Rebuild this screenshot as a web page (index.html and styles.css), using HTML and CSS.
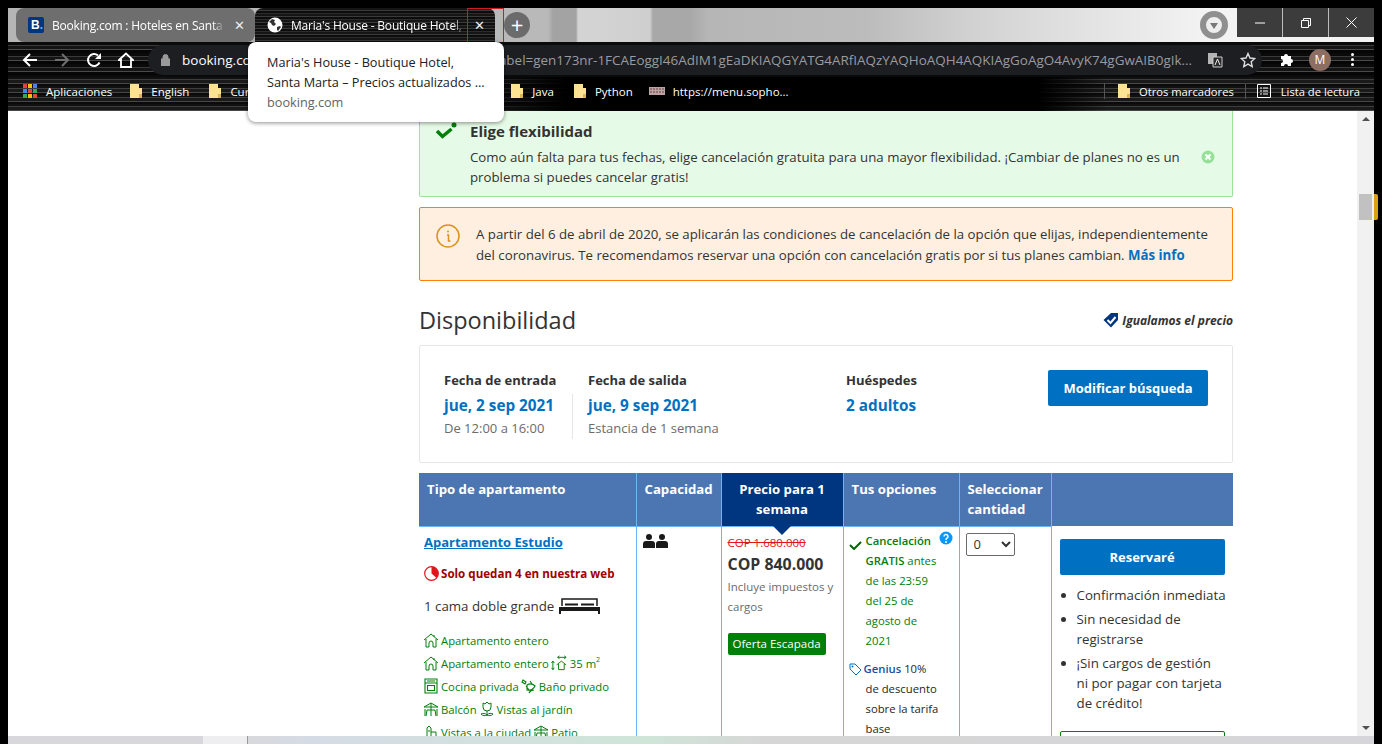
FILE: index.html
```html
<!DOCTYPE html>
<html lang="es">
<head>
<meta charset="utf-8">
<title>Maria's House - Boutique Hotel</title>
<link rel="stylesheet" href="styles.css">
</head>
<body>
<svg class="defs" width="0" height="0" aria-hidden="true">
  <symbol id="folder" viewBox="0 0 14 16"><path d="M1 1h9v4h3v10H1z" fill="#fde293"/><path d="M10 11h3v4h-3z" fill="#d8b65c"/></symbol>
  <symbol id="house" viewBox="0 0 16 16"><path d="M1 8l7-6 7 6M3 7v8h3v-4a2 2 0 0 1 4 0v4h3V7M11 3v2" fill="none" stroke="#008009" stroke-width="1"/></symbol>
  <symbol id="size" viewBox="0 0 18 16"><path d="M7 2h9M7 2l2-1.500M16 2l-2-1.500M7 2l2 1.500M16 2l-2 1.500M2 6v9M2 6L.5 8M2 6l1.500 2M2 15L.5 13M2 15l1.500-2M6 10l5-4 5 4M8 9v6h6V9" fill="none" stroke="#008009" stroke-width="1"/></symbol>
  <symbol id="kitchen" viewBox="0 0 14 16"><path d="M1 1h12v14H1zM1 5h12M3.500 7.500h7v5h-7zM3 3h8" fill="none" stroke="#008009" stroke-width="1.100"/></symbol>
  <symbol id="plant" viewBox="0 0 16 16"><path d="M2 2l3 2-1 2-3-2zM6 7c3-2 6-1 8 1-1 3-5 5-8 4zM8 15c1-2 3-3 5-3M5 8l3 4M9 3l2 3" fill="none" stroke="#008009" stroke-width="1.100"/></symbol>
  <symbol id="balcony" viewBox="0 0 16 16"><path d="M1 6l7-4 7 4zM8 2v13M4 9h8M2 8v7M14 8v7M4 9l-1 6M12 9l1 6" fill="none" stroke="#008009" stroke-width="1"/></symbol>
  <symbol id="flower" viewBox="0 0 16 16"><path d="M4 2l2 1 2-2 2 2 2-1v4a4 4 0 0 1-8 0zM8 10v5M8 14c-2 1-4 1-6-1 2-1 4-1 6 1zM8 14c2 1 4 1 6-1-2-1-4-1-6 1z" fill="none" stroke="#008009" stroke-width="1"/></symbol>
  <symbol id="city" viewBox="0 0 14 16"><path d="M3 15V4l2-2 2 2v11M7 8h5v7M1 15h12M5 6v2" fill="none" stroke="#008009" stroke-width="1"/></symbol>
</svg>

<div class="window">
  <header class="tabstrip">
    <div class="tab tab-inactive">
      <span class="fav-b">B<i>.</i></span>
      <span class="tab-title tab-fade">Booking.com : Hoteles en Santa Marta</span>
      <span class="tab-x">✕</span>
    </div>
    <div class="tab tab-active">
      <svg class="globe" width="16" height="16" viewBox="0 0 16 16"><circle cx="8" cy="8" r="7.500" fill="#fff"/><path d="M2 5l3-3 3 1-1 2 2 2-2 2-2-1-1-2zM10 10l3-1 1 1-3 4-1-1z" fill="#333"/></svg>
      <span class="tab-title tab-fade">Maria's House - Boutique Hotel, Santa Marta</span>
      <span class="tab-x">✕</span>
    </div>
    <div class="newtab">+</div>
    <div class="strip-fill"></div>
    <div class="profile-ring"><span class="profile-dot"></span></div>
    <div class="winctl">
      <span class="winbtn"><svg width="10" height="10" viewBox="0 0 10 10"><path d="M0 5h10" stroke="#fff"/></svg></span>
      <span class="winbtn"><svg width="10" height="10" viewBox="0 0 10 10"><path d="M.5 2.500h7v7h-7zM2.500 2.500v-2h7v7h-2" fill="none" stroke="#fff"/></svg></span>
      <span class="winbtn"><svg width="11" height="11" viewBox="0 0 11 11"><path d="M.5.5l10 10M10.500.5l-10 10" stroke="#fff"/></svg></span>
    </div>
    <div class="hoverbox"></div>
  </header>

  <nav class="toolbar">
    <svg class="tool" width="16" height="16" viewBox="0 0 16 16"><path d="M15 8H2M8 2L2 8l6 6" fill="none" stroke="#fff" stroke-width="2"/></svg>
    <svg class="tool" width="16" height="16" viewBox="0 0 16 16"><path d="M1 8h13M8 2l6 6-6 6" fill="none" stroke="#6f6f6f" stroke-width="2"/></svg>
    <svg class="tool" width="16" height="16" viewBox="0 0 16 16"><path d="M13.500 10.500A6 6 0 1 1 12 3.500" fill="none" stroke="#fff" stroke-width="2"/><path d="M15 1v6H9z" fill="#fff"/></svg>
    <svg class="tool" width="16" height="16" viewBox="0 0 16 16"><path d="M1 8l7-6.500L15 8h-2v7H3V8z" fill="none" stroke="#fff" stroke-width="1.800"/></svg>
    <div class="omnibox">
      <svg class="lock" width="9" height="12" viewBox="0 0 9 12"><path d="M0 5h9v7H0zM2 5V3a2.500 2.500 0 0 1 5 0v2" fill="#9a9a9a" stroke="#9a9a9a" fill-rule="evenodd"/></svg>
      <div class="url"><span class="url-host">booking.com</span>/hotel/co/marias-house-mar.es.html?label=gen173nr-1FCAEoggI46AdIM1gEaDKIAQGYATG4ARfIAQzYAQHoAQH4AQKIAgGoAgO4AvyK74gGwAIB0gIk...</div>
      <svg width="16" height="16" viewBox="0 0 16 16"><path d="M1 1h9v11H1z" fill="#b5b5b5"/><path d="M6 5h9v10H6z" fill="#2a2a2a" stroke="#ccc"/><path d="M8 13l2.500-6 2.500 6" fill="none" stroke="#eee"/></svg>
      <svg width="16" height="16" viewBox="0 0 16 16"><path d="M8 1.500l2 4.500 4.800.5-3.600 3.200 1 4.800L8 12.100l-4.200 2.400 1-4.800L1.200 6.500 6 6z" fill="none" stroke="#ddd" stroke-width="1.400"/></svg>
    </div>
    <svg class="puzzle" width="16" height="16" viewBox="0 0 16 16"><path d="M1 4h3a2 2 0 1 1 4 0h3v3a2 2 0 1 1 0 4v3H8a2 2 0 1 0-4 0H1v-3a2 2 0 1 0 0-4z" fill="#fff"/></svg>
    <span class="avatar">M</span>
    <span class="kebab"><i></i><i></i><i></i></span>
  </nav>

  <nav class="bookmarks">
    <span class="bm bm-apps"><svg width="14" height="14" viewBox="0 0 14 14"><path d="M0 0h4v4H0z" fill="#ea4335"/><path d="M5 0h4v4H5z" fill="#fbbc04"/><path d="M10 0h4v4h-4z" fill="#4285f4"/><path d="M0 5h4v4H0z" fill="#4285f4"/><path d="M5 5h4v4H5z" fill="#ea4335"/><path d="M10 5h4v4h-4z" fill="#34a853"/><path d="M0 10h4v4H0z" fill="#34a853"/><path d="M5 10h4v4H5z" fill="#fbbc04"/><path d="M10 10h4v4h-4z" fill="#ea4335"/></svg>Aplicaciones</span>
    <span class="bm"><svg width="14" height="16"><use href="#folder"/></svg>English</span>
    <span class="bm"><svg width="14" height="16"><use href="#folder"/></svg>Cursos</span>
    <span class="bm bm-java"><svg width="14" height="16"><use href="#folder"/></svg>Java</span>
    <span class="bm"><svg width="14" height="16"><use href="#folder"/></svg>Python</span>
    <span class="bm bm-menu"><svg width="16" height="8" viewBox="0 0 16 8"><path d="M0 0h16v8H0z" fill="#b9a4a4"/><path d="M1 2h14M1 5h14" stroke="#7a3a3a" stroke-dasharray="2 1"/></svg>https://menu.sopho...</span>
    <span class="bm bm-other"><svg width="14" height="16"><use href="#folder"/></svg>Otros marcadores</span>
    <span class="bm bm-reading"><svg width="14" height="14" viewBox="0 0 14 14"><path d="M.5.500h13v13H.5zM3 4h2M6 4h5M3 7h2M6 7h5M3 10h2M6 10h5" fill="none" stroke="#fff"/></svg>Lista de lectura</span>
  </nav>

  <div class="tooltip">
    <p>Maria's House - Boutique Hotel,</p>
    <p>Santa Marta – Precios actualizados ...</p>
    <p class="tooltip-host">booking.com</p>
  </div>

  <div class="viewport">
    <main class="content">
      <section class="notice-green">
        <svg class="notice-check" width="24" height="20" viewBox="0 0 24 20"><path d="M3 10l5.500 5.500L17.500 8" fill="none" stroke="#008009" stroke-width="3.500"/><circle cx="20" cy="4" r="2.500" fill="#008009"/></svg>
        <div class="notice-body">
          <h3>Elige flexibilidad</h3>
          <p>Como aún falta para tus fechas, elige cancelación gratuita para una mayor flexibilidad. ¡Cambiar de planes no es un problema si puedes cancelar gratis!</p>
        </div>
        <svg class="notice-close" width="14" height="14" viewBox="0 0 14 14"><circle cx="7" cy="7" r="6.500" fill="#97e09a"/><path d="M4.500 4.500l5 5M9.500 4.500l-5 5" stroke="#fff" stroke-width="2"/></svg>
      </section>

      <section class="notice-orange">
        <svg width="24" height="24" viewBox="0 0 24 24"><circle cx="12" cy="12" r="11" fill="none" stroke="#d9941e" stroke-width="1.500"/><path d="M11 11h1.500v6h2" fill="none" stroke="#d9941e" stroke-width="1.500"/><circle cx="12" cy="7.500" r="1" fill="#d9941e"/></svg>
        <p>A partir del 6 de abril de 2020, se aplicarán las condiciones de cancelación de la opción que elijas, independientemente del coronavirus. Te recomendamos reservar una opción con cancelación gratis por si tus planes cambian. <a href="#">Más info</a></p>
      </section>

      <div class="heading-row">
        <h2>Disponibilidad</h2>
        <span class="price-match"><svg width="16" height="16" viewBox="0 0 16 16"><path d="M8 1h7v7l-7 7.500L.5 8z" fill="#003580"/><path d="M4.500 8l3 3 5-6" fill="none" stroke="#fff" stroke-width="2"/></svg>Igualamos el precio</span>
      </div>

      <section class="search">
        <div class="search-col search-in">
          <div class="search-label">Fecha de entrada</div>
          <div class="search-values">
            <div class="search-value">jue, 2 sep 2021</div>
            <div class="search-sub">De 12:00 a 16:00</div>
          </div>
        </div>
        <div class="search-col search-out">
          <div class="search-label">Fecha de salida</div>
          <div class="search-values search-values-plain">
            <div class="search-value">jue, 9 sep 2021</div>
            <div class="search-sub">Estancia de 1 semana</div>
          </div>
        </div>
        <div class="search-col search-guests">
          <div class="search-label">Huéspedes</div>
          <div class="search-values search-values-plain">
            <div class="search-value">2 adultos</div>
          </div>
        </div>
        <button class="btn btn-modify">Modificar búsqueda</button>
      </section>

      <table class="rooms">
        <colgroup><col class="c1"><col class="c2"><col class="c3"><col class="c4"><col class="c5"><col class="c6"></colgroup>
        <thead>
          <tr>
            <th>Tipo de apartamento</th>
            <th>Capacidad</th>
            <th class="th-price">Precio para 1 semana</th>
            <th>Tus opciones</th>
            <th>Seleccionar cantidad</th>
            <th class="th-last"></th>
          </tr>
        </thead>
        <tbody>
          <tr>
            <td class="td-room">
              <a class="room-name" href="#">Apartamento Estudio</a>
              <div class="scarcity"><svg width="15" height="15" viewBox="0 0 15 15"><circle cx="7.500" cy="7.500" r="6.800" fill="#fff" stroke="#e0151c" stroke-width="1.200"/><path d="M7.500 7.500V.7A6.800 6.800 0 0 1 12.500 12z" fill="#e0151c"/></svg>Solo quedan 4 en nuestra web</div>
              <div class="bed">1 cama doble grande <svg width="43" height="16" viewBox="0 0 43 16"><path d="M4 8V1h35v7" fill="none" stroke="#1a1a1a" stroke-width="1.500"/><path d="M1 9h41v4H1zM1 13h2v3H1zM40 13h2v3h-2z" fill="#1a1a1a"/><path d="M7 6.500h13M23 6.500h13" stroke="#1a1a1a" stroke-width="2"/></svg></div>
              <div class="facility"><span class="fac"><svg width="16" height="16"><use href="#house"/></svg>Apartamento entero</span></div>
              <div class="facility"><span class="fac"><svg width="16" height="16"><use href="#house"/></svg>Apartamento entero</span><span class="fac"><svg width="17" height="16"><use href="#size"/></svg>35 m<sup>2</sup></span></div>
              <div class="facility"><span class="fac"><svg width="16" height="16"><use href="#kitchen"/></svg>Cocina privada</span><span class="fac"><svg width="16" height="16"><use href="#plant"/></svg>Baño privado</span></div>
              <div class="facility"><span class="fac"><svg width="16" height="16"><use href="#balcony"/></svg>Balcón</span><span class="fac"><svg width="16" height="16"><use href="#flower"/></svg>Vistas al jardín</span></div>
              <div class="facility"><span class="fac"><svg width="16" height="16"><use href="#city"/></svg>Vistas a la ciudad</span><span class="fac"><svg width="16" height="16"><use href="#balcony"/></svg>Patio</span></div>
            </td>
            <td class="td-cap">
              <svg width="25" height="14" viewBox="0 0 25 14"><circle cx="6" cy="3" r="3"/><path d="M0 14v-4a3 3 0 0 1 3-3h6a3 3 0 0 1 3 3v4z"/><circle cx="19" cy="3" r="3"/><path d="M13 14v-4a3 3 0 0 1 3-3h6a3 3 0 0 1 3 3v4z"/></svg>
            </td>
            <td class="td-price">
              <div class="old-price">COP 1.680.000</div>
              <div class="new-price">COP 840.000</div>
              <div class="taxes">Incluye impuestos y cargos</div>
              <span class="deal">Oferta Escapada</span>
            </td>
            <td class="td-options">
              <div class="option">
                <svg class="opt-check" width="13" height="10" viewBox="0 0 13 10"><path d="M1 5l4 4 7-7" fill="none" stroke="#006607" stroke-width="2"/></svg>
                <div class="opt-text"><strong>Cancelación<br>GRATIS</strong> antes<br>de las 23:59<br>del 25 de<br>agosto de<br>2021</div>
                <svg class="opt-help" width="14" height="14" viewBox="0 0 14 14"><circle cx="7" cy="7" r="6.500" fill="#0896ff"/><path d="M5 5.500a2 2 0 1 1 3 1.700c-.8.500-1 .8-1 1.800" fill="none" stroke="#fff" stroke-width="1.500"/><circle cx="7" cy="11" r="1" fill="#fff"/></svg>
              </div>
              <div class="option genius">
                <svg class="opt-tag" width="13" height="13" viewBox="0 0 13 13"><path d="M1 1h5l6 6-5 5-6-6z" fill="none" stroke="#0071c2"/><circle cx="3.500" cy="3.500" r="1" fill="#0071c2"/></svg>
                <div class="opt-text"><strong class="genius-name">Genius</strong> 10%<br><span class="genius-rest">de descuento<br>sobre la tarifa<br>base</span></div>
              </div>
            </td>
            <td class="td-qty">
              <select class="qty"><option>0</option></select>
            </td>
            <td class="td-reserve">
              <button class="btn btn-reserve">Reservaré</button>
              <ul class="perks">
                <li>Confirmación inmediata</li>
                <li>Sin necesidad de<br>registrarse</li>
                <li>¡Sin cargos de gestión<br>ni por pagar con tarjeta<br>de crédito!</li>
              </ul>
              <div class="green-box"></div>
            </td>
          </tr>
        </tbody>
      </table>
    </main>
    <aside class="scrollbar">
      <span class="arrow-up"></span>
      <span class="thumb"></span>
      <span class="arrow-down"></span>
    </aside>
  </div>

  <footer class="taskbar"><span class="task-light"></span><span class="task-clock">1:22</span></footer>
</div>
</body>
</html>
```

FILE: styles.css
```css
* { box-sizing: border-box; }
html, body { margin: 0; height: 744px; overflow: hidden; background: #000; }
body { font-family: "Open Sans", "Noto Sans", sans-serif; font-size: 13.250px; color: #333; }
.defs { position: absolute; }
p, h2, h3, ul { margin: 0; padding: 0; }

.window { position: relative; display: flex; flex-direction: column; height: 744px; padding: 8px 8px 0; }

/* tab strip */
.tabstrip {
  position: relative; display: flex; align-items: stretch; height: 34px; flex: none;
  padding-left: 8px;
  background:
    linear-gradient(90deg, #b5b5b5 0, #b9b9b9 540px, #a3a3a3 545px, #a3a3a3 568px, #d4d4d4 570px, #cfcfcf 642px, #a8a8a8 645px, #a8a8a8 682px, #b6b6b6 700px, #bcbcbc 860px, #cfcfcf 950px, #e0e0e0 1060px, #f3f3f3 1200px);
}
.tab { display: flex; align-items: center; width: 240px; padding: 0 8px 0 12px; color: #fff; font-size: 12px; white-space: nowrap; border-radius: 8px 8px 0 0; }
.tab-inactive { background: #6e6e6e; border-radius: 8px; width: 239px; }
.tab-active { background: repeating-linear-gradient(180deg, #151515 0 2px, #3b3b3b 2px 3px, #0c0c0c 3px 5px, #2c2c2c 5px 6px); }
.fav-b { flex: none; width: 16px; height: 16px; border-radius: 2px; background: #003580; color: #fff; font: 700 12px/16px "Liberation Sans", sans-serif; padding-left: 3px; }
.fav-b i { font-style: normal; color: #57b5ff; }
.globe { flex: none; }
.tab-title { flex: 1; min-width: 0; overflow: hidden; margin-left: 8px; letter-spacing: -.2px; }
.tab-fade { -webkit-mask-image: linear-gradient(90deg, #000 93%, transparent 100%); mask-image: linear-gradient(90deg, #000 93%, transparent 100%); }
.tab-x { flex: none; width: 16px; margin-left: 6px; font-size: 13px; text-align: center; color: #eee; }
.newtab { flex: none; width: 26px; height: 26px; margin: 4px 0 0 9px; border-radius: 50%; background: #6b6b6b; color: #fff; font-size: 22px; line-height: 24px; text-align: center; }
.strip-fill { flex: 1; }
.profile-ring { flex: none; width: 28px; height: 28px; margin: 3px 9px 0 0; border-radius: 50%; border: 6px solid #8f8f8f; background: #eee; display: flex; align-items: center; justify-content: center; }
.profile-dot { width: 0; height: 0; border: 4px solid transparent; border-top: 6px solid #777; margin-top: 5px; }
.winctl { flex: none; display: flex; width: 137px; height: 29px; background: #3c3c3c; }
.winbtn { flex: 1; display: flex; align-items: center; justify-content: center; border-left: 1px solid #bdbdbd; }
.winbtn:first-child { border-left: 0; }
.hoverbox { position: absolute; left: 459px; top: 0; width: 37px; height: 34px; border: 1px solid #d01c1c; border-bottom: 0; }

/* toolbar */
.toolbar {
  display: flex; align-items: center; height: 35px; flex: none; padding-left: 14px;
  background: repeating-linear-gradient(180deg, #0a0a0a 0 3px, #3a3a3a 3px 4px, #141414 4px 7px, #4a4a4a 7px 8px, #060606 8px 11px);
}
.tool { flex: none; margin-right: 16px; }
.omnibox { flex: none; display: flex; align-items: center; width: 1114px; height: 30px; margin-left: -2px; padding: 0 6px 0 13px; border-radius: 15px; background: #1d1e22; gap: 17px; }
.omnibox svg { flex: none; }
.omnibox .lock { margin-right: -5px; }
.url { flex: 1; min-width: 0; margin-right: -10px; overflow: hidden; white-space: nowrap; color: #9a9ba0; font-size: 13.450px; }
.url-host { color: #fff; font-size: 13.500px; }
.puzzle { flex: none; margin-left: 18px; }
.avatar { flex: none; width: 22px; height: 22px; margin-left: 13px; border-radius: 50%; background: #8d6e63; color: #fff; font-size: 12px; line-height: 22px; text-align: center; }
.kebab { flex: none; display: flex; flex-direction: column; gap: 2px; margin-left: 20px; }
.kebab i { width: 3px; height: 3px; border-radius: 50%; background: #fff; }

/* bookmarks */
.bookmarks {
  display: flex; align-items: center; gap: 19px; height: 34px; flex: none; padding: 0 0 6px 15px;
  background: linear-gradient(90deg, rgba(0,0,0,0) 0, rgba(0,0,0,0) 440px, #000 560px, #000 1030px, rgba(0,0,0,0) 1100px),
    repeating-linear-gradient(180deg, #111 0 2px, #3d3d3d 2px 3px, #1a1a1a 3px 6px, #474747 6px 7px, #0b0b0b 7px 9px);
  color: #fff; font-size: 11.500px; white-space: nowrap;
}
.bm { display: flex; align-items: center; gap: 8px; }
.bm-apps { gap: 9px; margin-right: -2px; }
.bm-java { margin-left: 224px; }
.bm-menu { margin-left: -3px; }
.bm-other { margin-left: auto; padding-left: 12px; border-left: 1px solid #555; font-size: 11.200px; }
.bm-reading { padding-left: 11px; gap: 10px; border-left: 1px solid #555; margin: 0 14px 0 -8px; font-size: 11.200px; }

/* tooltip */
.tooltip { position: absolute; left: 248px; top: 42px; z-index: 5; width: 256px; height: 80px; padding: 10px 19px; border-radius: 8px; background: #fff; box-shadow: 0 1px 4px rgba(0,0,0,.45); font-size: 12.700px; line-height: 20px; color: #202124; white-space: nowrap; }
.tooltip-host { color: #5f6368; }

/* page */
.viewport { display: flex; height: 625px; flex: none; background: #fff; }
.content { flex: 1; min-width: 0; height: 625px; overflow: hidden; padding-left: 411px; }
.content > * { width: 814px; }

.notice-green { display: flex; height: 86px; border: 1px solid #9be29b; border-top: 0; border-radius: 0 0 2px 2px; background: #e6fbe7; padding: 10px 17px 0 14px; }
.notice-check { flex: none; }
.notice-body { flex: 1; margin-left: 12px; }
.notice-body h3 { font-size: 15px; font-weight: 700; line-height: 20px; }
.notice-body p { margin-top: 6px; line-height: 20px; }
.notice-close { flex: none; margin: 29px 0 0 10px; }

.notice-orange { display: flex; height: 74px; margin-top: 10px; border: 1px solid #ff8000; border-radius: 2px; background: #ffefe0; padding: 16px 20px 0 16px; }
.notice-orange svg { flex: none; }
.notice-orange p { margin-left: 16px; line-height: 21px; }
.notice-orange a { color: #0071c2; font-weight: 700; text-decoration: none; }

.heading-row { display: flex; justify-content: space-between; align-items: center; height: 64px; padding-top: 14px; }
.heading-row h2 { font-size: 23.500px; font-weight: 500; }
.price-match { display: flex; align-items: center; gap: 3px; font-size: 12px; font-weight: 700; font-style: italic; }

.search { display: flex; height: 118px; border: 1px solid #e6e6e6; border-radius: 2px; padding: 24px 24px 0; }
.search-col { flex: none; }
.search-in { width: 129px; }
.search-out { width: 273px; padding-left: 15px; }
.search-guests { width: 202px; }
.search-label { font-weight: 700; font-size: 13px; line-height: 20px; }
.search-values { border-right: 1px solid #e6e6e6; height: 45px; margin-top: 4px; }
.search-values-plain { border-right: 0; }
.search-value { margin-top: 2px; color: #0071c2; font-size: 15.300px; font-weight: 700; line-height: 22px; }
.search-sub { margin-top: 2px; color: #6b6b6b; font-size: 13px; line-height: 20px; }
.btn { border: 0; border-radius: 2px; background: #0071c2; color: #fff; font: 700 13px "Open Sans", sans-serif; }
.btn-modify { flex: none; width: 160px; height: 36px; }

/* table */
.rooms { margin-top: 10px; border-collapse: collapse; table-layout: fixed; }
.c1 { width: 217px; } .c2 { width: 85px; } .c3 { width: 122px; } .c4 { width: 116px; } .c5 { width: 92px; } .c6 { width: 182px; }
.rooms th { height: 53px; padding: 6px 8px 0; vertical-align: top; background: #4c76b2; border: 1px solid #6cb4f5; border-top: 0; color: #fff; font-size: 13.200px; font-weight: 700; line-height: 20px; text-align: left; }
.rooms th:first-child, .rooms td:first-child { border-left: 0; }
.rooms th.th-price { position: relative; background: #003580; text-align: center; }
.th-price::after { content: ""; position: absolute; left: 50%; bottom: -9px; margin-left: -9px; border: 9px solid transparent; border-bottom: 0; border-top-color: #003580; }
.rooms th.th-last { border-right: 0; border-bottom: 0; }
.rooms td { height: 300px; vertical-align: top; border-left: 1px solid #6cb4f5; border-right: 1px solid #6cb4f5; padding: 0; }
.rooms td:last-child { border-right: 0; }

.rooms .td-room { padding: 5px 5px 0; }
.room-name { display: block; color: #0071c2; font-size: 13px; font-weight: 700; line-height: 20px; }
.scarcity { display: flex; align-items: center; gap: 2px; margin-top: 12px; color: #a00000; font-size: 11.600px; font-weight: 700; line-height: 20px; }
.bed { display: flex; align-items: center; gap: 4px; margin-top: 12px; font-size: 13.300px; line-height: 20px; }
.facility { display: flex; gap: 3px; height: 23px; align-items: center; color: #008009; font-size: 11.300px; white-space: nowrap; }
.bed + .facility { margin-top: 13px; }
.fac { display: flex; align-items: center; gap: 2px; }
.fac sup { font-size: 7px; line-height: 0; align-self: flex-start; margin: 5px 0 0 -2px; }
.fac svg { margin-left: -1px; }

.rooms .td-cap { padding: 7px 0 0 6px; }
.td-cap svg { display: block; fill: #1a1a1a; }

.rooms .td-price { padding: 6px 5px 0 6px; }
.old-price { color: #e0151c; font-size: 11.500px; line-height: 20px; text-decoration: line-through; }
.new-price { font-size: 15.900px; font-weight: 700; line-height: 23px; }
.taxes { margin-top: 1px; color: #6b6b6b; font-size: 11.500px; line-height: 20px; }
.deal { display: inline-block; margin-top: 16px; padding: 0 5px; border-radius: 2px; background: #008009; color: #fff; font-size: 11.500px; line-height: 22px; white-space: nowrap; }

.rooms .td-options { padding: 4px 4px 0 5px; }
.option { display: flex; color: #008009; font-size: 11.300px; line-height: 20px; }
.opt-check { flex: none; margin: 9px 4px 0 0; }
.opt-text { flex: 1; white-space: nowrap; }
.opt-text strong { font-weight: 600; }
.opt-help { flex: none; margin-right: 2px; }
.genius { margin-top: 8px; color: #262626; }
.opt-tag { flex: none; margin: 4px 2px 0 0; }
.genius-name { color: #1450a8; font-weight: 700; }
.genius-rest { display: inline-block; margin-left: 2px; }

.rooms .td-qty { padding: 6px 0 0 6px; }
.qty { width: 49px; height: 23px; padding-left: 3px; border: 1px solid #6b6b6b; border-radius: 2px; background: #fff; color: #333; font: 13px "Open Sans", sans-serif; }

.rooms .td-reserve { padding: 13px 4px 0 8px; }
.btn-reserve { display: block; width: 165px; height: 36px; }
.perks { margin-top: 10px; padding-left: 17px; font-size: 13.300px; line-height: 20px; white-space: nowrap; }
.perks li { margin-bottom: 4px; }
.green-box { width: 165px; height: 40px; margin-top: 18px; border: 1px solid #008009; border-radius: 2px; }

/* scrollbar */
.scrollbar { flex: none; display: flex; flex-direction: column; align-items: center; width: 17px; padding: 6px 0; background: #f1f1f1; }
.arrow-up { width: 0; height: 0; border: 4px solid transparent; border-top: 0; border-bottom: 4px solid #505050; }
.thumb { position: relative; width: 13px; height: 26px; margin-top: 73px; background: #c1c1c1; }
.thumb::after { content: ""; position: absolute; left: 15px; top: 0; width: 4px; height: 26px; border-radius: 0 2px 2px 0; background: #d9a213; }
.arrow-down { width: 0; height: 0; margin-top: auto; border: 4px solid transparent; border-bottom: 0; border-top: 4px solid #505050; }

/* bottom strip */
.taskbar { display: flex; height: 8px; flex: none; overflow: hidden; background: linear-gradient(90deg, #d8d8dc 0, #d8d8dc 240px, #d5dbe5 300px, #cfe5d8 640px, #d6d6d6 760px, #d6d6da 100%); font-size: 11px; line-height: 14px; color: #222; }
.task-light { width: 45px; margin-left: 195px; border-right: 1px solid #999; background: #eeeef0; }
.task-clock { margin-left: auto; margin-right: 94px; padding-top: 5px; }
```
